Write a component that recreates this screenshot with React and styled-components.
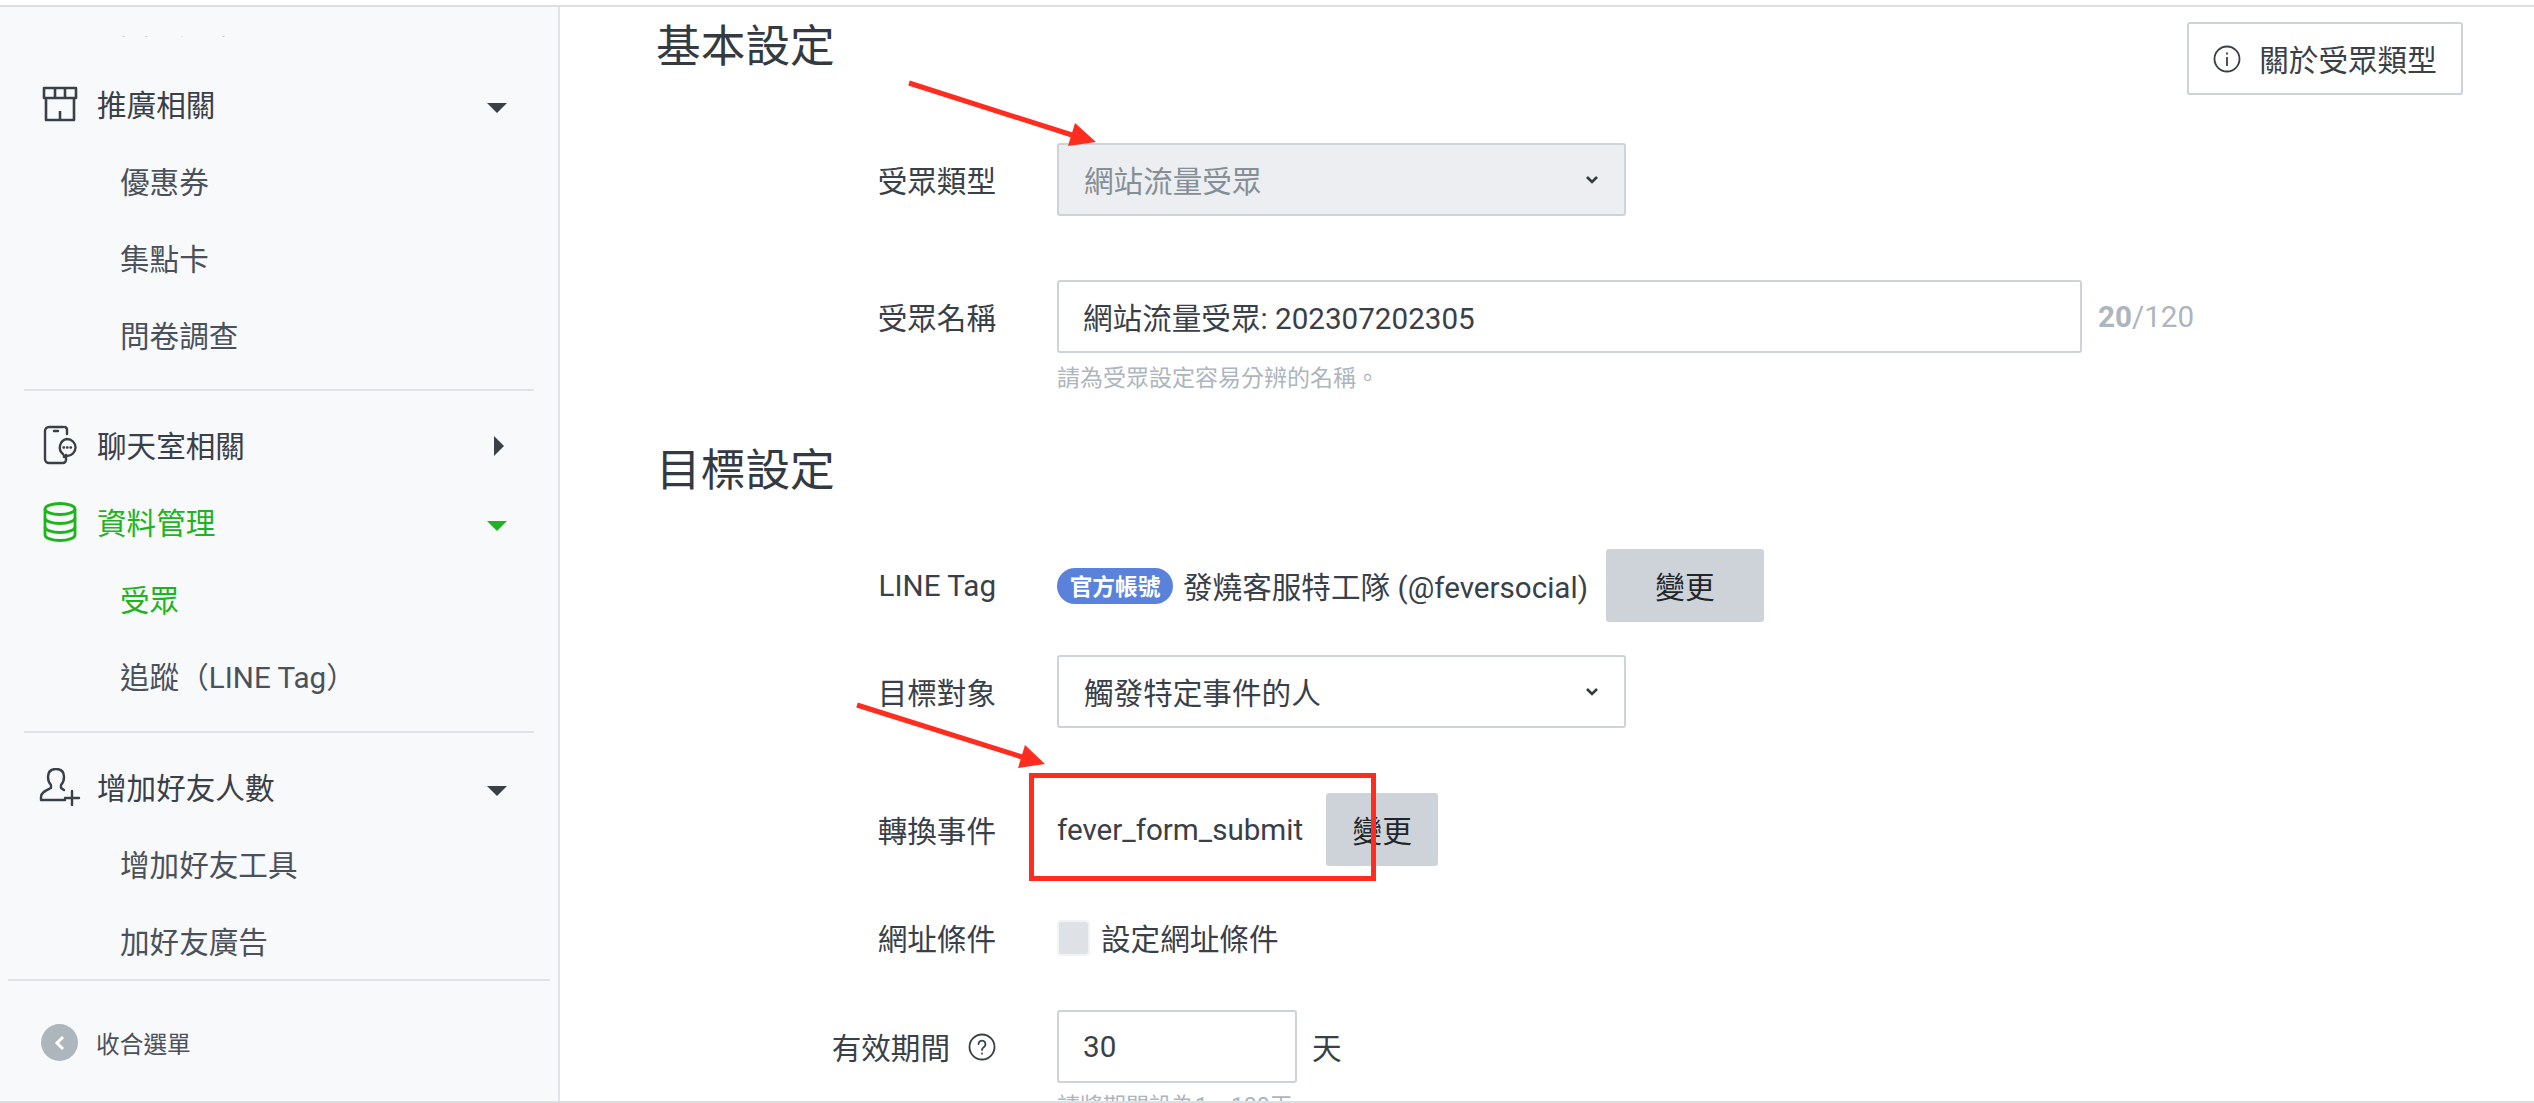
import styled, { createGlobalStyle } from 'styled-components';

const GlobalStyle = createGlobalStyle`
  html, body {
    margin: 0;
    padding: 0;
    background: #fff;
  }
  * {
    box-sizing: border-box;
  }
`;

const StoreIcon = () => (
  <svg width="36" height="36" viewBox="0 0 36 36" fill="none" stroke="currentColor" strokeWidth="2.6" strokeLinejoin="round">
    <path d="M2 2h32v10H2zM13 2v10M23 2v10" />
    <path d="M4 12v22h28V12M18 25v9" />
  </svg>
);

const ChatPhoneIcon = () => (
  <svg width="34" height="40" viewBox="0 0 34 40" fill="none" stroke="currentColor" strokeWidth="2.4" strokeLinecap="round" strokeLinejoin="round">
    <path d="M20 2H6a4 4 0 0 0-4 4v28a4 4 0 0 0 4 4h14a3 3 0 0 0 3-3v-5" />
    <path d="M22 2a3 3 0 0 1 2 3v4M11 6h4" />
    <path d="M24 14a8.500 8.500 0 0 1 0 17c-1 0-2 .5-3 1 0-1 0-2-1-3a8.500 8.500 0 0 1 4-15z" />
    <path d="M20.500 22.500h.5M24 22.500h.5M27.500 22.500h.5" />
  </svg>
);

const DatabaseIcon = () => (
  <svg width="34" height="40" viewBox="0 0 34 40" fill="none" stroke="currentColor" strokeWidth="2.8">
    <ellipse cx="17" cy="7" rx="15" ry="5.500" />
    <path d="M2 7v26c0 3 7 5.500 15 5.500S32 36 32 33V7" />
    <path d="M2 16c0 3 7 5.500 15 5.500S32 19 32 16M2 25c0 3 7 5.500 15 5.500S32 28 32 25" />
  </svg>
);

const AddFriendIcon = () => (
  <svg width="42" height="38" viewBox="0 0 42 38" fill="none" stroke="currentColor" strokeWidth="2.4" strokeLinecap="round" strokeLinejoin="round">
    <path d="M26 32H2v-3c0-5 6-7 10-9v-3c-2-2-3-4-3-8 0-5 3-8 8-8s8 3 8 8c0 3-1 6-3 8v3l3 2" />
    <path d="M33 23v14M26 30h14" />
  </svg>
);

const InfoIcon = () => (
  <svg width="28" height="28" viewBox="0 0 28 28" fill="none" stroke="currentColor" strokeWidth="1.8">
    <circle cx="14" cy="14" r="12.500" />
    <path d="M14 12v9M14 7.500v2" />
  </svg>
);

const HelpIcon = () => (
  <svg width="28" height="28" viewBox="0 0 28 28" fill="none" stroke="currentColor" strokeWidth="1.8" strokeLinecap="round">
    <circle cx="14" cy="14" r="12.500" />
    <path d="M10.500 11a3.500 3.500 0 1 1 5.500 3c-1.300.8-2 1.500-2 3M14 20.500v.2" />
  </svg>
);

const Chevron = () => (
  <svg width="14" height="10" viewBox="0 0 14 10" fill="none" stroke="#343a40" strokeWidth="2.6">
    <path d="M2 2l5 5 5-5" />
  </svg>
);

const Sidebar = ({ children }) => <SideWrap>{children}</SideWrap>;

const menuTop = [
  { label: '推廣相關', icon: <StoreIcon />, open: true, subs: ['優惠券', '集點卡', '問卷調查'] },
];
const menuMiddle = [
  { label: '聊天室相關', icon: <ChatPhoneIcon />, open: false, subs: [] },
  { label: '資料管理', icon: <DatabaseIcon />, open: true, active: true, subs: ['受眾', '追蹤（LINE Tag）'] },
];
const menuBottom = [
  { label: '增加好友人數', icon: <AddFriendIcon />, open: true, subs: ['增加好友工具', '加好友廣告'] },
];

const MenuGroup = ({ items }) =>
  items.map((item) => (
    <div key={item.label}>
      <MenuRow $active={item.active}>
        <IconBox>{item.icon}</IconBox>
        <span>{item.label}</span>
        {item.open ? <CaretDown $active={item.active} /> : <CaretRight />}
      </MenuRow>
      {item.subs.map((sub, i) => (
        <SubRow key={sub} $active={item.active && i === 0}>{sub}</SubRow>
      ))}
    </div>
  ));

const Arrow = ({ x, y, w, h, shaft, head }) => (
  <ArrowSvg $x={x} $y={y} width={w} height={h} viewBox={`${x} ${y} ${w} ${h}`}>
    <line x1={shaft[0]} y1={shaft[1]} x2={shaft[2]} y2={shaft[3]} stroke="#ff2d20" strokeWidth="5" />
    <polygon points={head} fill="#ff2d20" />
  </ArrowSvg>
);

const App = () => (
  <Page>
    <GlobalStyle />
    <TopLine />
    <Body>
      <Sidebar>
        <ClippedRow><span>圖文選單</span></ClippedRow>
        <MenuGroup items={menuTop} />
        <Divider $inset={24} $top={16} $bottom={15} />
        <MenuGroup items={menuMiddle} />
        <Divider $inset={24} $top={17} $bottom={15} />
        <MenuGroup items={menuBottom} />
        <Divider $inset={8} $top={0} $bottom={0} />
        <Collapse>
          <CollapseDot>
            <svg width="12" height="16" viewBox="0 0 12 16" fill="none" stroke="#fff" strokeWidth="3">
              <path d="M9 2L3 8l6 6" />
            </svg>
          </CollapseDot>
          <span>收合選單</span>
        </Collapse>
      </Sidebar>

      <Main>
        <HeaderRow>
          <Heading>基本設定</Heading>
          <AboutButton><InfoIcon />關於受眾類型</AboutButton>
        </HeaderRow>

        <FormRow $top={48}>
          <Label>受眾類型</Label>
          <Select $disabled>網站流量受眾<Chevron /></Select>
        </FormRow>

        <FormRow $top={64}>
          <Label>受眾名稱</Label>
          <Inline $gap={16}>
            <TextField>網站流量受眾: 202307202305</TextField>
            <Counter><b>20</b>/120</Counter>
          </Inline>
        </FormRow>
        <Hint $top={9}>請為受眾設定容易分辨的名稱。</Hint>

        <Heading $top={45}>目標設定</Heading>

        <FormRow $top={48}>
          <Label>LINE Tag</Label>
          <Inline $gap={10}>
            <Badge>官方帳號</Badge>
            <PlainText>發燒客服特工隊 (@feversocial)</PlainText>
            <GrayButton $width={158} $left={8}>變更</GrayButton>
          </Inline>
        </FormRow>

        <FormRow $top={33}>
          <Label>目標對象</Label>
          <Select>觸發特定事件的人<Chevron /></Select>
        </FormRow>

        <FormRow $top={65}>
          <Label>轉換事件</Label>
          <Inline $gap={23}>
            <PlainText>fever_form_submit</PlainText>
            <GrayButton $width={112}>變更</GrayButton>
          </Inline>
        </FormRow>

        <FormRow $top={50}>
          <Label>網址條件</Label>
          <Inline $gap={11}>
            <Checkbox />
            <PlainText>設定網址條件</PlainText>
          </Inline>
        </FormRow>

        <FormRow $top={51}>
          <Label>有效期間<HelpSlot><HelpIcon /></HelpSlot></Label>
          <Inline $gap={15}>
            <TextField $width={240}>30</TextField>
            <PlainText>天</PlainText>
          </Inline>
        </FormRow>
        <Hint $top={7}>請將期間設為1～180天</Hint>
      </Main>
    </Body>
    <BottomLine />

    <Arrow x={900} y={75} w={205} h={80} shaft={[909, 83, 1072, 135]} head="1075,123 1096,142 1068,146" />
    <Arrow x={850} y={695} w={205} h={80} shaft={[857, 705, 1022, 757]} head="1025,745 1045,764 1018,768" />
    <RedBox />
  </Page>
);

const Page = styled.div`
  position: relative;
  width: 2534px;
  height: 1103px;
  overflow: hidden;
  display: flex;
  flex-direction: column;
  background: #fff;
  font-family: Roboto, 'Noto Sans CJK TC', sans-serif;
  font-size: 29.6px;
  color: #3a4048;
`;

const TopLine = styled.div`
  flex: none;
  height: 2px;
  margin-top: 5px;
  background: #dcdee0;
`;

const BottomLine = styled.div`
  position: absolute;
  left: 0;
  right: 0;
  bottom: 0;
  height: 2px;
  background: #dcdee0;
`;

const Body = styled.div`
  flex: 1;
  min-height: 0;
  display: flex;
`;

const SideWrap = styled.aside`
  flex: none;
  width: 560px;
  height: 100%;
  overflow: hidden;
  background: #f8f9fb;
  border-right: 2px solid #dfe3e8;
`;

const ClippedRow = styled.div`
  height: 4px;
  margin-top: 29px;
  margin-bottom: 25px;
  padding-left: 120px;
  overflow: hidden;
  display: flex;
  align-items: flex-end;
  color: #4a515a;
  span {
    line-height: 34px;
    flex: none;
  }
`;

const MenuRow = styled.div`
  height: 77px;
  display: flex;
  align-items: center;
  padding: 0 51px 0 38px;
  color: ${(p) => (p.$active ? '#1db41d' : '#3a4048')};
`;

const IconBox = styled.span`
  flex: none;
  width: 44px;
  margin-right: 15px;
  display: flex;
  justify-content: center;
`;

const SubRow = styled.div`
  height: 77px;
  display: flex;
  align-items: center;
  padding-left: 120px;
  color: ${(p) => (p.$active ? '#1db41d' : '#4a515a')};
`;

const CaretDown = styled.i`
  margin-left: auto;
  margin-top: 8px;
  width: 0;
  height: 0;
  border-left: 10px solid transparent;
  border-right: 10px solid transparent;
  border-top: 10px solid ${(p) => (p.$active ? '#1db41d' : '#3a4048')};
`;

const CaretRight = styled.i`
  margin-left: auto;
  margin-right: 3px;
  margin-top: 2px;
  width: 0;
  height: 0;
  border-top: 10px solid transparent;
  border-bottom: 10px solid transparent;
  border-left: 10px solid #3a4048;
`;

const Divider = styled.hr`
  height: 2px;
  border: 0;
  background: #dfe2e6;
  margin: ${(p) => `${p.$top}px ${p.$inset}px ${p.$bottom}px`};
`;

const Collapse = styled.div`
  display: flex;
  align-items: center;
  gap: 18px;
  margin-top: 43px;
  padding-left: 41px;
  font-size: 23.7px;
  color: #4a515a;
`;

const CollapseDot = styled.span`
  flex: none;
  width: 37px;
  height: 37px;
  border-radius: 50%;
  background: #adb5bd;
  display: flex;
  align-items: center;
  justify-content: center;
`;

const Main = styled.main`
  flex: 1;
  min-width: 0;
  padding: 10px 71px 0 96px;
`;

const HeaderRow = styled.div`
  display: flex;
  justify-content: space-between;
  align-items: flex-start;
`;

const Heading = styled.h2`
  margin: ${(p) => p.$top || 0}px 0 0;
  height: 60px;
  line-height: 60px;
  font-size: 44.7px;
  font-weight: 400;
  color: #343a42;
`;

const AboutButton = styled.button`
  margin-top: 5px;
  width: 276px;
  height: 73px;
  display: flex;
  align-items: center;
  justify-content: center;
  gap: 18px;
  background: #fff;
  border: 2px solid #ced3d9;
  border-radius: 3px;
  font: inherit;
  color: #3a4048;
  svg {
    flex: none;
  }
`;

const FormRow = styled.div`
  margin-top: ${(p) => p.$top}px;
  display: grid;
  grid-template-columns: 340px 1fr;
  column-gap: 61px;
  align-items: center;
`;

const Label = styled.div`
  display: flex;
  justify-content: flex-end;
  align-items: center;
  color: #3a4048;
  white-space: nowrap;
`;

const HelpSlot = styled.span`
  display: flex;
  margin-left: 18px;
`;

const Select = styled.div`
  width: 569px;
  height: 73px;
  padding: 0 25px;
  display: flex;
  align-items: center;
  justify-content: space-between;
  border: 2px solid #ced3d9;
  border-radius: 3px;
  background: ${(p) => (p.$disabled ? '#eceef1' : '#fff')};
  color: ${(p) => (p.$disabled ? '#868e96' : '#3a4048')};
`;

const TextField = styled.div`
  width: ${(p) => p.$width || 1025}px;
  height: 73px;
  padding: 0 24px;
  display: flex;
  align-items: center;
  border: 2px solid #ced3d9;
  border-radius: 3px;
  background: #fff;
`;

const Inline = styled.div`
  display: flex;
  align-items: center;
  gap: ${(p) => p.$gap}px;
`;

const Counter = styled.span`
  color: #adb5bd;
  b {
    font-weight: 700;
  }
`;

const Hint = styled.div`
  margin-top: ${(p) => p.$top}px;
  margin-left: 401px;
  font-size: 23px;
  line-height: 34px;
  color: #adb5bd;
`;

const Badge = styled.span`
  width: 116px;
  height: 36px;
  border-radius: 18px;
  background: #5b82db;
  color: #fff;
  font-size: 22.700px;
  font-weight: 700;
  display: flex;
  align-items: center;
  justify-content: center;
`;

const PlainText = styled.span`
  white-space: nowrap;
`;

const GrayButton = styled.button`
  width: ${(p) => p.$width}px;
  height: 73px;
  margin-left: ${(p) => p.$left || 0}px;
  border: 0;
  border-radius: 3px;
  background: #ced3da;
  font: inherit;
  color: #22262b;
`;

const Checkbox = styled.span`
  width: 33px;
  height: 36px;
  border: 2px solid #f2f3f5;
  border-radius: 4px;
  background: #dee1e6;
`;

const ArrowSvg = styled.svg`
  position: absolute;
  left: ${(p) => p.$x}px;
  top: ${(p) => p.$y}px;
`;

const RedBox = styled.div`
  position: absolute;
  left: 1029px;
  top: 773px;
  width: 347px;
  height: 108px;
  border: 5px solid #ff2d20;
`;

export default App;
